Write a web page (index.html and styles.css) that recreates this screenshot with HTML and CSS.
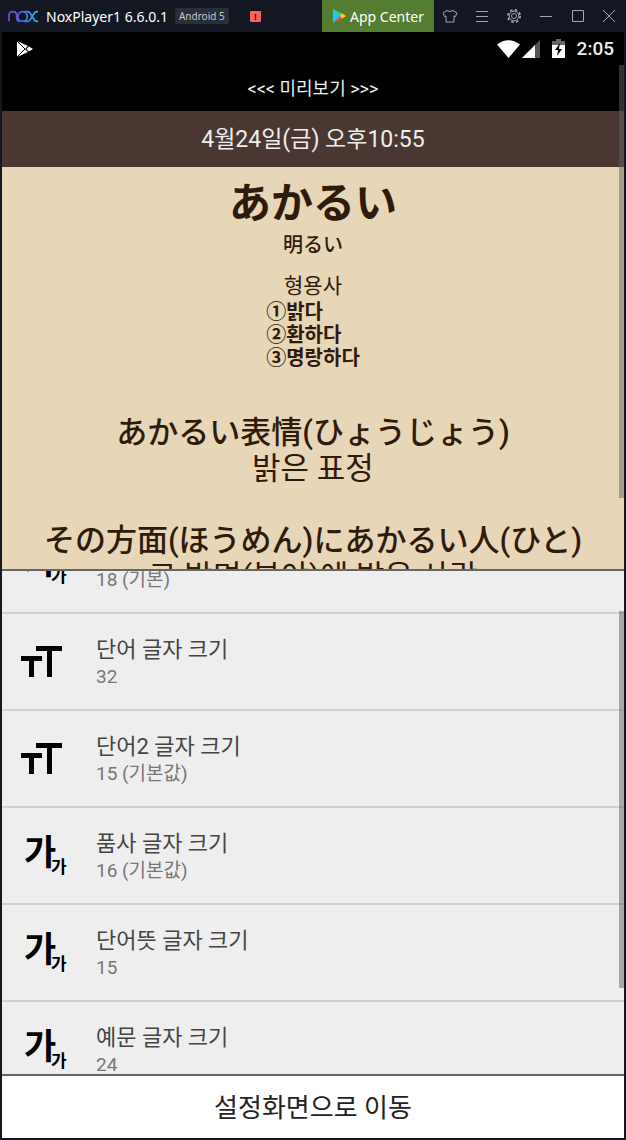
FILE: index.html
```html
<!DOCTYPE html>
<html lang="ko">
<head>
<meta charset="utf-8">
<meta name="viewport" content="width=device-width, initial-scale=1">
<title>NoxPlayer1 6.6.0.1</title>
<link rel="stylesheet" href="styles.css">
</head>
<body>
<div class="window">
  <header class="titlebar">
    <svg class="logo" viewBox="0 0 32 14" role="img" aria-label="Nox">
      <defs><linearGradient id="nox" gradientUnits="userSpaceOnUse" x1="0" x2="31" y1="0" y2="0"><stop offset="0" stop-color="#8a3be0"/><stop offset=".5" stop-color="#4a6be8"/><stop offset="1" stop-color="#12c8f0"/></linearGradient></defs>
      <g fill="none" stroke="url(#nox)" stroke-width="1.800">
        <path d="M1 12.500V6.500q0-4 4-4t4 4V8q0 4.500 3 4.500"/>
        <circle cx="15" cy="7.500" r="4.900"/>
        <path d="M17 2.600h3q2 0 3.200 2l3.600 6q1.200 2 3.200 2h1"/>
        <path d="M17 12.500h3q2 0 3.200-2l3.600-6q1.200-1.900 3.200-1.900h1"/>
      </g>
    </svg>
    <span class="name">NoxPlayer1 6.6.0.1</span>
    <span class="tag">Android 5</span>
    <span class="alert">!</span>
    <button class="app-center" type="button">
      <svg width="14" height="16" viewBox="0 0 14 16"><path fill="#20c8ff" d="M1 1v14l7-7z"/><path fill="#25e07a" d="M1 1l7 7 3-2z"/><path fill="#ff4a50" d="M1 15l7-7 3 2z"/><path fill="#ffd21e" d="M10.500 5.500L14 8l-3.500 2.500L8 8z"/></svg>
      App Center
    </button>
    <nav class="tools">
      <button type="button" aria-label="테마"><svg viewBox="0 0 16 16"><path d="M5 2.500L1 5l1.500 3.500 1.500-.5v6h8V8l1.500.5L15 5l-4-2.500q-3 2-6 0z"/></svg></button>
      <button type="button" aria-label="메뉴"><svg viewBox="0 0 16 16"><path d="M2 3.500h12M2 8.500h12M2 13.500h12"/></svg></button>
      <button type="button" aria-label="설정"><svg viewBox="0 0 16 16"><circle cx="8" cy="8" r="2.500"/><circle cx="8" cy="8" r="4.800"/><circle cx="8" cy="8" r="6.200" stroke-width="1.600" stroke-dasharray="2.600 2.270"/></svg></button>
      <button type="button" aria-label="최소화"><svg viewBox="0 0 16 16"><path d="M2 8.500h12"/></svg></button>
      <button type="button" aria-label="최대화"><svg viewBox="0 0 16 16"><path d="M2.500 2.500h11v11h-11z"/></svg></button>
      <button type="button" aria-label="닫기"><svg viewBox="0 0 16 16"><path d="M2 2l12 12M14 2L2 14"/></svg></button>
    </nav>
  </header>

  <main class="screen">
    <div class="status">
      <svg class="play" viewBox="0 0 18 18"><path fill="#fff" d="M1 1l11 5-3 3 3 3-11 5zM13 6.500L17 9l-4 2.500L10.500 9z"/><path d="M1 1l8 8-8 8" fill="none" stroke="#000"/></svg>
      <div class="signals">
        <svg width="23" height="18" viewBox="0 0 23 18"><path fill="#fff" d="M0 4.500Q11.500-4 23 4.500L11.500 18z"/></svg>
        <svg width="18" height="18" viewBox="0 0 18 18"><path fill="#555" d="M18 0v18H0z"/><path fill="#fff" d="M13 5v13H0z"/></svg>
        <svg class="battery" width="13" height="19" viewBox="0 0 13 19"><path fill="#666" d="M4 0h5v2h4v5H0V2h4z"/><path fill="#fff" d="M0 6h13v13H0z"/><path fill="#000" d="M8 4L3 11h3l-1 6 5-7H7z"/></svg>
        <time class="clock">2:05</time>
      </div>
    </div>

    <section class="preview">
      <h2 class="preview-title">&lt;&lt;&lt; 미리보기 &gt;&gt;&gt;</h2>
      <div class="date">4월24일(금) 오후10:55</div>
      <div class="card">
        <div class="word" lang="ja">あかるい</div>
        <div class="word2" lang="ja">明るい</div>
        <div class="pos">형용사</div>
        <div class="meaning">①밝다<br>②환하다<br>③명랑하다</div>
        <div class="example"><div lang="ja">あかるい表情(ひょうじょう)</div><div>밝은 표정</div></div>
        <div class="example"><div lang="ja">その方面(ほうめん)にあかるい人(ひと)</div><div>그 방면(분야)에 밝은 사람</div></div>
      </div>
      <span class="thumb thumb-preview"></span>
    </section>

    <section class="settings">
      <ul class="list">
        <li><button class="row" type="button"><svg class="icon" viewBox="0 0 48 48" aria-hidden="true"><text class="ga-big" x="6" y="34">가</text><text class="ga-small" x="33" y="42">가</text></svg><span class="text"><span class="label">날짜 글자 크기</span><span class="value">18 (기본)</span></span></button></li>
        <li><button class="row" type="button"><svg class="icon" viewBox="0 0 48 48" aria-hidden="true"><path d="M18 9h26v5H34v26h-5V14H18zM3 19h21v5h-8v16h-5V24H3z"/></svg><span class="text"><span class="label">단어 글자 크기</span><span class="value">32</span></span></button></li>
        <li><button class="row" type="button"><svg class="icon" viewBox="0 0 48 48" aria-hidden="true"><path d="M18 9h26v5H34v26h-5V14H18zM3 19h21v5h-8v16h-5V24H3z"/></svg><span class="text"><span class="label">단어2 글자 크기</span><span class="value">15 (기본값)</span></span></button></li>
        <li><button class="row" type="button"><svg class="icon" viewBox="0 0 48 48" aria-hidden="true"><text class="ga-big" x="6" y="34">가</text><text class="ga-small" x="33" y="42">가</text></svg><span class="text"><span class="label">품사 글자 크기</span><span class="value">16 (기본값)</span></span></button></li>
        <li><button class="row" type="button"><svg class="icon" viewBox="0 0 48 48" aria-hidden="true"><text class="ga-big" x="6" y="34">가</text><text class="ga-small" x="33" y="42">가</text></svg><span class="text"><span class="label">단어뜻 글자 크기</span><span class="value">15</span></span></button></li>
        <li><button class="row" type="button"><svg class="icon" viewBox="0 0 48 48" aria-hidden="true"><text class="ga-big" x="6" y="34">가</text><text class="ga-small" x="33" y="42">가</text></svg><span class="text"><span class="label">예문 글자 크기</span><span class="value">24</span></span></button></li>
      </ul>
      <span class="thumb thumb-settings"></span>
    </section>

    <button class="go" type="button">설정화면으로 이동</button>
  </main>
</div>
</body>
</html>
```
FILE: styles.css
```css
* { box-sizing: border-box; }
body { margin: 0; background: #131722; font-family: Roboto, "Noto Sans CJK KR", sans-serif; }
button { margin: 0; padding: 0; border: 0; background: none; color: inherit; font: inherit; }
.window { display: flex; flex-direction: column; height: 100vh; padding: 0 2px 2px; }

.titlebar { display: flex; align-items: center; flex: none; height: 32px; padding-left: 6px; color: #fff; font-family: "Noto Sans", "Open Sans", sans-serif; }
.logo { width: 31px; height: 14px; margin-right: 7px; }
.name { font-size: 14px; white-space: nowrap; }
.tag { margin-left: 7px; padding: 0 4px; border-radius: 2px; background: #2a2e38; color: #c4c6ca; font-size: 10px; line-height: 16px; white-space: nowrap; }
.alert { width: 11px; margin-left: 21px; border-radius: 1px; background: #ff5f5f; color: #131722; font-size: 9px; font-weight: 700; line-height: 11px; text-align: center; }
.app-center { display: flex; align-items: center; justify-content: center; gap: 4px; width: 112px; height: 32px; margin-left: auto; background: #547d31; font-size: 14px; white-space: nowrap; }
.tools { display: flex; }
.tools button { display: grid; place-items: center; width: 32px; height: 32px; }
.tools button:last-child { width: 30px; }
.tools svg { width: 16px; height: 16px; fill: none; stroke: #a4a6ad; }

.screen { display: flex; flex-direction: column; flex: 1; min-height: 0; background: #eee; }
.status { display: flex; align-items: center; justify-content: space-between; flex: none; height: 33px; padding: 0 10px 0 14px; background: #000; }
.play { width: 18px; height: 18px; }
.signals { display: flex; align-items: center; gap: 2px; }
.battery { margin: 0 10px; }
.clock { color: #eee; font-size: 19px; font-weight: 500; }

.preview { position: relative; display: flex; flex-direction: column; flex: 1 1 0; min-height: 0; overflow: hidden; border-bottom: 2px solid #666; }
.preview-title { flex: none; height: 46px; margin: 0; background: #000; color: #eee; font-size: 18px; font-weight: 400; line-height: 48px; text-align: center; }
.date { flex: none; height: 56px; background: #4a3731; color: #eee; font-size: 23px; line-height: 58px; text-align: center; }
.card { display: flex; flex-direction: column; align-items: center; flex: 1 0 auto; padding-top: 8px; background: #e8d6b9; color: #2f1b0c; }
.card [lang="ja"] { font-family: Roboto, "Noto Sans CJK JP", sans-serif; font-weight: 500; }
.card .word { font-size: 42px; font-weight: 700; line-height: 58px; }
.word2 { font-size: 20px; line-height: 24px; }
.pos { margin-top: 15px; font-size: 21px; line-height: 28px; }
.meaning { margin-top: 1px; margin-bottom: 45px; font-size: 20px; font-weight: 700; line-height: 23px; }
.example { margin-bottom: 36px; font-size: 31px; line-height: 36px; text-align: center; white-space: nowrap; }

.settings { position: relative; flex: 1 1 0; min-height: 0; overflow: hidden; border-bottom: 2px solid #666; }
.list { margin: -54px 0 0; padding: 0; list-style: none; }
.row { display: flex; align-items: center; gap: 30px; width: 100%; height: 97px; padding: 0 16px; border-bottom: 2px solid #d0d0d0; text-align: left; }
.icon { flex: none; width: 48px; height: 48px; overflow: visible; }
.ga-big { font-size: 35px; font-weight: 700; }
.ga-small { font-size: 17px; font-weight: 700; }
.text { display: flex; flex-direction: column; padding-top: 4px; }
.label { color: #444; font-size: 22px; line-height: 28px; }
.value { color: #777; font-size: 19px; line-height: 26px; }

.go { flex: none; height: 62px; padding-bottom: 3px; background: #fff; color: #222; font-size: 26px; }

.thumb { position: absolute; right: 0; width: 5px; background: rgba(100, 100, 100, .5); }
.thumb-preview { top: 0; height: 86%; }
.thumb-settings { top: 8%; height: 75%; }
```
